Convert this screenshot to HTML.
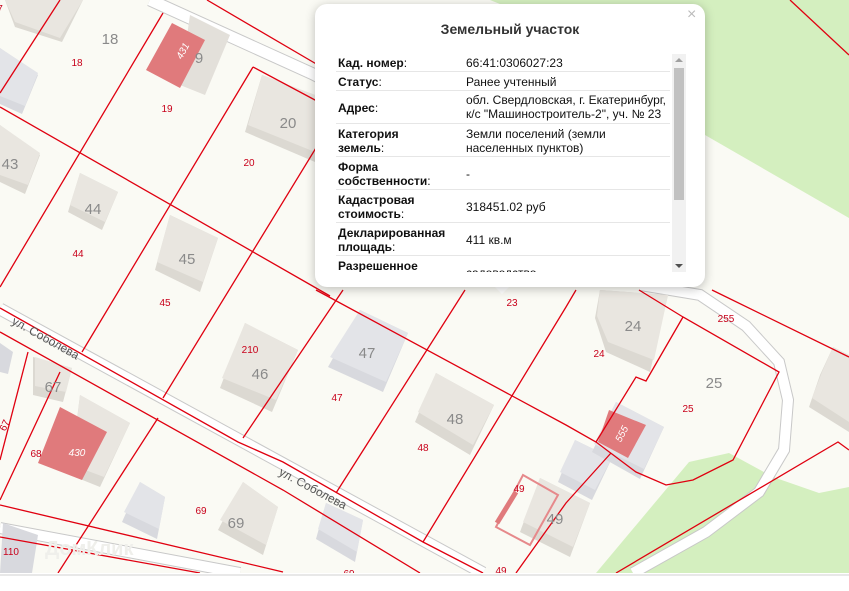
<!DOCTYPE html>
<html><head><meta charset="utf-8">
<style>
html,body{margin:0;padding:0;background:#fff;}
body{width:849px;height:591px;position:relative;overflow:hidden;font-family:"Liberation Sans",sans-serif;}
svg{position:absolute;left:0;top:0;}
.popup{position:absolute;left:315px;top:4px;width:390px;height:283px;background:#fff;border-radius:12px;box-shadow:0 2px 10px rgba(0,0,0,0.25);}
.arrow{position:absolute;left:492px;top:284px;width:0;height:0;border-left:10px solid transparent;border-right:10px solid transparent;border-top:10px solid #fff;}
.title{position:absolute;left:0;width:390px;top:17px;text-align:center;font-weight:bold;font-size:14px;color:#333;}
.close{position:absolute;left:372px;top:2px;font-size:16px;color:#bbb;}
.scroll{position:absolute;left:21px;top:50px;width:334px;height:218px;overflow:hidden;}
.row{position:absolute;left:0;width:334px;border-bottom:1px solid #e6e6e6;font-size:12px;color:#111;line-height:14px;}
.row .l{position:absolute;left:2px;font-weight:bold;}
.row .l span{font-weight:normal;}
.row .v{position:absolute;left:130px;}
.sb{position:absolute;left:357px;top:50px;width:14px;height:218px;background:#f1f1f1;}
.thumb{position:absolute;left:2px;top:14px;width:10px;height:132px;background:#c1c1c1;}
.bottomline{position:absolute;left:0;top:574px;width:849px;height:2px;background:#e8e8e8;}
</style></head><body>
<svg width="849" height="573" viewBox="0 0 849 573" font-family="Liberation Sans, sans-serif">
<rect width="849" height="573" fill="#fafaf4"/>
<polygon points="490,0 849,0 849,218 705,135 640,60" fill="#d4efbf"/>
<polygon points="596,573 689,462 729,453 773,477 819,493 849,487 849,573" fill="#d4efbf"/>
<g fill="none">
<path d="M0,309 L483,573" stroke="#c8c8c8" stroke-width="13"/>
<path d="M0,309 L483,573" stroke="#fff" stroke-width="11"/>
<path d="M0,528 L240,573" stroke="#c8c8c8" stroke-width="12"/>
<path d="M0,528 L240,573" stroke="#fff" stroke-width="10"/>
<path d="M150,0 L313,74 L340,88" stroke="#c8c8c8" stroke-width="13"/>
<path d="M150,0 L313,74 L340,88" stroke="#fff" stroke-width="11"/>
<path d="M640,285 L700,295 L746,326 L779,362 L788,400 L784,450 L759,492 L706,532 L633,573" stroke="#c8c8c8" stroke-width="12"/>
<path d="M640,285 L700,295 L746,326 L779,362 L788,400 L784,450 L759,492 L706,532 L633,573" stroke="#fff" stroke-width="10"/>
</g>
<g>
<polygon points="5,0 83,0 62,42 15,27" fill="#dcd9d2"/><polygon points="5,0 83,0 60,38 15,22" fill="#e9e6e0"/>
<polygon points="0,48 38,75 22,114 0,104" fill="#d8d9de"/><polygon points="0,48 38,73 25,106 0,96" fill="#e3e4e8"/>
<polygon points="0,125 40,155 25,194 0,182" fill="#dcd9d2"/><polygon points="0,125 40,153 28,185 0,175" fill="#e9e6e0"/>
<polygon points="80,173 118,192 102,230 68,212" fill="#dcd9d2"/><polygon points="80,173 118,192 105,222 70,205" fill="#e9e6e0"/>
<polygon points="170,215 218,238 200,292 155,270" fill="#dcd9d2"/><polygon points="170,215 218,238 203,282 157,262" fill="#e9e6e0"/>
<polygon points="262,75 315,95 315,162 245,132" fill="#dcd9d2"/><polygon points="262,75 315,95 315,152 248,125" fill="#e9e6e0"/>
<polygon points="190,15 230,35 205,95 180,85" fill="#e3e0da"/>
<polygon points="172,23 205,40 180,88 146,70" fill="#e07a7c"/>
<polygon points="245,323 298,350 272,412 220,388" fill="#dcd9d2"/><polygon points="245,323 298,350 276,400 222,378" fill="#e9e6e0"/>
<polygon points="360,310 408,333 383,392 328,367" fill="#d8d9de"/><polygon points="360,310 408,333 386,382 330,357" fill="#e3e4e8"/>
<polygon points="436,373 494,405 470,455 415,422" fill="#dcd9d2"/><polygon points="436,373 494,405 473,445 418,412" fill="#e9e6e0"/>
<polygon points="540,478 590,503 570,557 520,532" fill="#dcd9d2"/><polygon points="540,478 590,503 573,547 523,522" fill="#e9e6e0"/>
<polygon points="575,440 612,458 592,500 558,482" fill="#d8d9de"/><polygon points="575,440 612,458 595,490 560,472" fill="#e3e4e8"/>
<polygon points="616,402 664,427 640,479 592,452" fill="#d8d9de"/><polygon points="616,402 664,427 644,469 594,444" fill="#e3e4e8"/>
<polygon points="609,410 646,425 628,458 598,442" fill="#e07a7c"/>
<polygon points="600,290 668,295 650,372 606,352 595,318" fill="#dcd9d2"/><polygon points="600,290 668,295 654,360 608,342 597,316" fill="#e9e6e0"/>
<polygon points="833,347 849,355 849,432 809,407 820,375" fill="#dcd9d2"/><polygon points="833,347 849,355 849,422 812,398 822,372" fill="#e9e6e0"/>
<polygon points="33,357 72,368 63,402 33,395" fill="#dcd9d2"/><polygon points="35,357 72,368 66,392 35,386" fill="#e9e6e0"/>
<polygon points="80,395 130,423 100,487 70,475" fill="#dcd9d2"/><polygon points="80,395 130,423 104,477 72,465" fill="#e9e6e0"/>
<polygon points="60,407 107,432 82,480 38,463" fill="#e07a7c"/>
<polygon points="0,343 13,352 8,374 0,372" fill="#d8d9de"/>
<polygon points="140,482 165,497 157,539 122,522" fill="#d8d9de"/><polygon points="140,482 165,497 159,529 124,512" fill="#e3e4e8"/>
<polygon points="243,482 278,507 263,555 218,530" fill="#dcd9d2"/><polygon points="243,482 278,507 266,545 220,520" fill="#e9e6e0"/>
<polygon points="3,523 38,535 32,573 0,573" fill="#d8d9de"/>
<polygon points="326,503 363,520 355,562 316,539" fill="#d8d9de"/><polygon points="326,503 363,520 357,552 318,529" fill="#e3e4e8"/>
</g>
<polygon points="523,475 558,495 530,545 496,527" fill="none" stroke="#e6898b" stroke-width="2"/>
<line x1="497" y1="523" x2="516" y2="492" stroke="#e07a7c" stroke-width="5"/>
<g fill="none" stroke="#e00010" stroke-width="1.3">
<path d="M0,93 L60,0"/>
<path d="M163,13 L0,287"/>
<path d="M0,107 L330,296"/>
<path d="M207,0 L330,72"/>
<path d="M253,67 L330,108"/>
<path d="M253,67 L82,352"/>
<path d="M330,125 L163,398"/>
<path d="M0,308 L238,442 L283,462 L423,542 L483,573"/>
<path d="M0,332 L283,490 L420,573"/>
<path d="M243,438 L343,290"/>
<path d="M28,352 L0,460"/>
<path d="M60,372 L0,500"/>
<path d="M158,418 L58,573"/>
<path d="M0,505 L283,572"/>
<path d="M0,537 L200,573"/>
<path d="M316,290 L566,425 L596,442 L636,472 L666,485 L693,480 L733,460 L779,372 L683,317 L639,290"/>
<path d="M683,317 L646,381 L636,377 L596,442"/>
<path d="M336,493 L465,290"/>
<path d="M423,542 L566,307 L576,290"/>
<path d="M516,573 L566,503 L611,453"/>
<path d="M712,290 L849,357"/>
<path d="M616,573 L838,442 L849,450"/>
<path d="M790,0 L849,55"/>
</g>
<g fill="#c8001a" font-size="10" text-anchor="middle">
<text x="77" y="66">18</text><text x="167" y="112">19</text><text x="249" y="166">20</text>
<text x="78" y="257">44</text><text x="165" y="306">45</text><text x="250" y="353">210</text>
<text x="337" y="401">47</text><text x="423" y="451">48</text><text x="501" y="574">49</text>
<text x="201" y="514">69</text><text x="36" y="457">68</text><text x="11" y="555">110</text>
<text x="599" y="357">24</text><text x="688" y="412">25</text><text x="726" y="322">255</text>
<text x="512" y="306">23</text><text x="519" y="492">49</text><text x="349" y="577">69</text>
<text x="4" y="429" transform="rotate(-65 4 425)">67</text>
<text x="0" y="12">7</text>
</g>
<g fill="#fff" font-size="10" text-anchor="middle" font-style="italic">
<text x="77" y="456">430</text>
<text x="183" y="54" transform="rotate(-62 183 51)">431</text>
<text x="622" y="437" transform="rotate(-62 622 434)">555</text>
</g>
<g fill="#8a8a8a" font-size="15" text-anchor="middle">
<text x="110" y="44">18</text><text x="199" y="63">9</text><text x="288" y="128">20</text>
<text x="10" y="169">43</text><text x="93" y="214">44</text><text x="187" y="264">45</text>
<text x="260" y="379">46</text><text x="367" y="358">47</text><text x="455" y="424">48</text>
<text x="555" y="524">49</text><text x="236" y="528">69</text><text x="53" y="392">67</text>
<text x="633" y="331">24</text><text x="714" y="388">25</text>
</g>
<g fill="#555" font-size="12">
<text x="13" y="324" transform="rotate(29 13 320)">ул. Соболева</text>
<text x="280" y="475" transform="rotate(28 280 471)">ул. Соболева</text>
</g>
<text x="45" y="555" fill="#efefeb" font-size="20" font-weight="bold">ДомКлик</text>
</svg>
<div class="bottomline"></div>
<div class="arrow"></div>
<div class="popup">
<div class="close">×</div>
<div class="title">Земельный участок</div>
<div class="scroll">
<div class="row" style="top:0;height:17px"><span class="l" style="top:2px">Кад. номер<span>:</span></span><span class="v" style="top:2px">66:41:0306027:23</span></div>
<div class="row" style="top:18px;height:18px"><span class="l" style="top:3px">Статус<span>:</span></span><span class="v" style="top:3px">Ранее учтенный</span></div>
<div class="row" style="top:37px;height:32px"><span class="l" style="top:10px">Адрес<span>:</span></span><span class="v" style="top:2px">обл. Свердловская, г. Екатеринбург,<br>к/с "Машиностроитель-2", уч. № 23</span></div>
<div class="row" style="top:70px;height:32px"><span class="l" style="top:3px">Категория<br>земель<span>:</span></span><span class="v" style="top:3px">Земли поселений (земли<br>населенных пунктов)</span></div>
<div class="row" style="top:103px;height:32px"><span class="l" style="top:3px">Форма<br>собственности<span>:</span></span><span class="v" style="top:10px">-</span></div>
<div class="row" style="top:136px;height:32px"><span class="l" style="top:3px">Кадастровая<br>стоимость<span>:</span></span><span class="v" style="top:10px">318451.02 руб</span></div>
<div class="row" style="top:169px;height:32px"><span class="l" style="top:3px">Декларированная<br>площадь<span>:</span></span><span class="v" style="top:10px">411 кв.м</span></div>
<div class="row" style="top:202px;height:32px;border:none"><span class="l" style="top:3px">Разрешенное<br>использование<span>:</span></span><span class="v" style="top:10px">садоводство</span></div>
</div>
<div class="sb"><div class="thumb"></div>
<div style="position:absolute;left:3px;top:4px;border-left:4px solid transparent;border-right:4px solid transparent;border-bottom:4px solid #a0a0a0"></div>
<div style="position:absolute;left:3px;top:210px;border-left:4px solid transparent;border-right:4px solid transparent;border-top:4px solid #505050"></div>
</div>
</div>
</body></html>
